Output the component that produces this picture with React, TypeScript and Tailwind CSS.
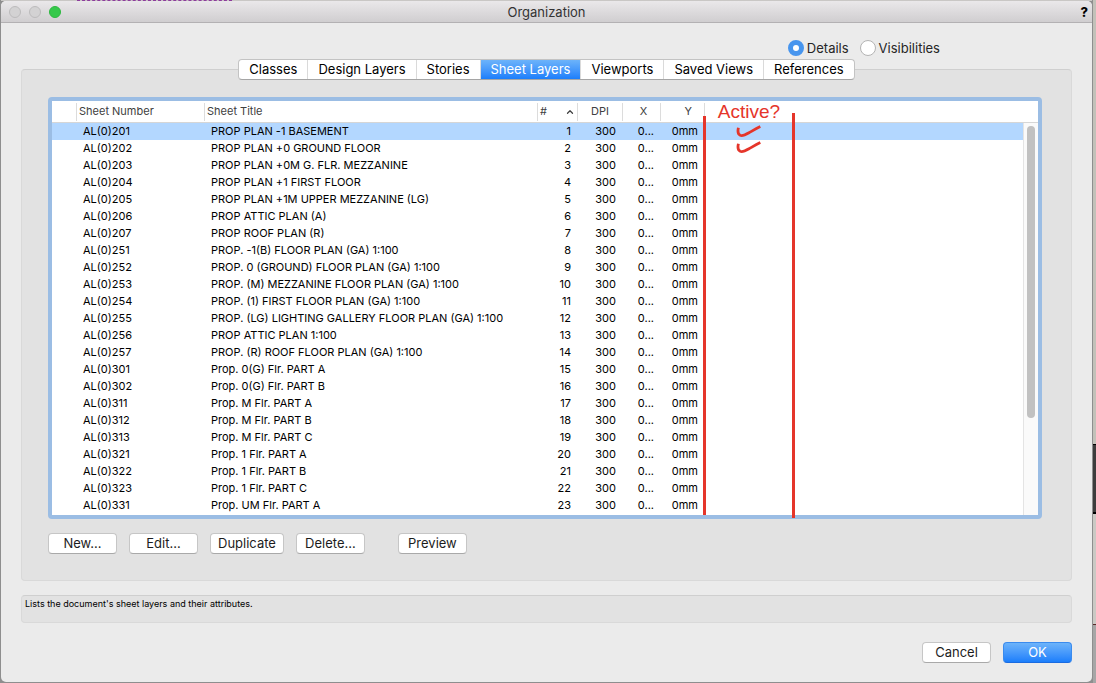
import React, { useState } from 'react';
import { ChevronUp } from 'lucide-react';

interface Sheet {
  number: string;
  title: string;
}

const tabs = [
  'Classes',
  'Design Layers',
  'Stories',
  'Sheet Layers',
  'Viewports',
  'Saved Views',
  'References',
];

const sheets: Sheet[] = [
  { number: 'AL(0)201', title: 'PROP PLAN -1 BASEMENT' },
  { number: 'AL(0)202', title: 'PROP PLAN +0 GROUND FLOOR' },
  { number: 'AL(0)203', title: 'PROP PLAN +0M G. FLR. MEZZANINE' },
  { number: 'AL(0)204', title: 'PROP PLAN +1 FIRST FLOOR' },
  { number: 'AL(0)205', title: 'PROP PLAN +1M UPPER MEZZANINE (LG)' },
  { number: 'AL(0)206', title: 'PROP ATTIC PLAN (A)' },
  { number: 'AL(0)207', title: 'PROP ROOF PLAN (R)' },
  { number: 'AL(0)251', title: 'PROP. -1(B) FLOOR PLAN (GA) 1:100' },
  { number: 'AL(0)252', title: 'PROP. 0 (GROUND) FLOOR PLAN (GA) 1:100' },
  { number: 'AL(0)253', title: 'PROP. (M) MEZZANINE FLOOR PLAN (GA) 1:100' },
  { number: 'AL(0)254', title: 'PROP. (1) FIRST FLOOR PLAN (GA) 1:100' },
  { number: 'AL(0)255', title: 'PROP. (LG) LIGHTING GALLERY FLOOR PLAN (GA) 1:100' },
  { number: 'AL(0)256', title: 'PROP ATTIC PLAN 1:100' },
  { number: 'AL(0)257', title: 'PROP. (R) ROOF FLOOR PLAN (GA) 1:100' },
  { number: 'AL(0)301', title: 'Prop. 0(G) Flr. PART A' },
  { number: 'AL(0)302', title: 'Prop. 0(G) Flr. PART B' },
  { number: 'AL(0)311', title: 'Prop. M Flr. PART A' },
  { number: 'AL(0)312', title: 'Prop. M Flr. PART B' },
  { number: 'AL(0)313', title: 'Prop. M Flr. PART C' },
  { number: 'AL(0)321', title: 'Prop. 1 Flr. PART A' },
  { number: 'AL(0)322', title: 'Prop. 1 Flr. PART B' },
  { number: 'AL(0)323', title: 'Prop. 1 Flr. PART C' },
  { number: 'AL(0)331', title: 'Prop. UM Flr. PART A' },
];

interface PushButtonProps {
  children: React.ReactNode;
  className?: string;
  primary?: boolean;
}

const PushButton: React.FC<PushButtonProps> = ({ children, className = '', primary = false }) => (
  <button
    type="button"
    className={`h-[21px] min-w-[69px] rounded border px-[7px] text-[13px] leading-[19px] ${
      primary
        ? 'border-[#3a8bee] border-b-[#1a6be0] bg-linear-to-b from-[#6cb3fa] to-[#1a7efb] text-white'
        : 'border-[#c6c6c6] border-b-[#a9a9a9] bg-white text-[#1c1c1c]'
    } ${className}`}
  >
    {children}
  </button>
);

interface RadioProps {
  label: string;
  checked: boolean;
  onChange: () => void;
}

const Radio: React.FC<RadioProps> = ({ label, checked, onChange }) => (
  <label className="flex items-center gap-[3px] text-[13px] leading-4 text-[#262626]">
    <input
      type="radio"
      name="view"
      checked={checked}
      onChange={onChange}
      className="size-4 appearance-none rounded-full border border-[#b4b4b4] bg-white checked:border-[5px] checked:border-[#4795ee]"
    />
    {label}
  </label>
);

interface HeadProps {
  children?: React.ReactNode;
  className?: string;
}

const Head: React.FC<HeadProps> = ({ children, className = '' }) => (
  <th scope="col" className="h-[22px] border-b border-[#d6d6d6] p-0 font-normal">
    <div className={`flex h-[18px] items-center border-r border-[#dcdcdc] ${className}`}>{children}</div>
  </th>
);

const CheckMark = () => (
  <svg viewBox="0 0 26 13" className="block h-[13px] w-[26px]" fill="none" stroke="#e5352a" strokeLinecap="butt">
    <path d="M2.400 2.800C1.700 5.800 1.900 9.200 4.200 10.300C6.500 11.200 10 9.500 13 7.800C16.500 5.800 20 3.600 24.300 1.600" strokeWidth="2.800" />
  </svg>
);

const App: React.FC = () => {
  const [tab, setTab] = useState('Sheet Layers');
  const [view, setView] = useState('Details');
  const [selected, setSelected] = useState('AL(0)201');

  return (
    <div className="flex min-h-screen bg-[#8e8e8e] pl-px font-['Inter',sans-serif]">
      <div className="flex min-w-0 flex-1 flex-col pb-px">
        {/* document showing above the window */}
        <div className="h-px bg-[#c9c7c5] pl-[76px]">
          <div className="w-[155px] border-t border-dashed border-[#8d3c9c]" />
        </div>

        <div className="flex flex-1 flex-col rounded-[5px] bg-[#ebebeb]">
          <header className="grid h-[22px] grid-cols-[1fr_auto_1fr] items-center rounded-t-[5px] border-b border-[#b3b1b3] bg-linear-to-b from-[#eae8ea] to-[#d0ced0]">
            <div className="flex gap-2 pl-2">
              <button type="button" aria-label="Close" className="size-3 rounded-full border border-[#bcbbbc] bg-[#d3d2d3]" />
              <button type="button" aria-label="Minimize" className="size-3 rounded-full border border-[#bcbbbc] bg-[#d3d2d3]" />
              <button type="button" aria-label="Zoom" className="size-3 rounded-full border border-[#2db83f] bg-[#35c84a]" />
            </div>
            <h1 className="text-[13px] leading-4 text-[#333]">Organization</h1>
            <button type="button" aria-label="Help" className="justify-self-end pr-1 text-[13px] leading-4 font-extrabold text-black">
              ?
            </button>
          </header>

          <main className="flex flex-1 flex-col px-5">
            <div className="mt-[17px] flex justify-end gap-[11px] pr-[132px]">
              <Radio label="Details" checked={view === 'Details'} onChange={() => setView('Details')} />
              <Radio label="Visibilities" checked={view === 'Visibilities'} onChange={() => setView('Visibilities')} />
            </div>

            <nav className="relative z-10 mt-[3px] -mb-[11px] flex justify-center">
              <div className="flex h-[21px] divide-x divide-[#dadada] overflow-hidden rounded border border-[#c3c3c3] border-b-[#a5a5a5] bg-white">
                {tabs.map((name) => (
                  <button
                    key={name}
                    type="button"
                    onClick={() => setTab(name)}
                    className={`px-[10px] text-[13px] leading-[19px] ${
                      tab === name ? 'bg-linear-to-b from-[#6cb3fa] to-[#1a7efb] text-white' : 'text-black'
                    }`}
                  >
                    {name}
                  </button>
                ))}
              </div>
            </nav>

            <section className="flex-1 rounded border border-[#d9d9d9] border-t-[#cfcfcf] bg-[#e2e2e2] px-[26px] pt-[27px]">
              <div className="relative mr-[3px] flex rounded border-4 border-[#9bbde4] bg-white pb-px">
                <table className="min-w-0 flex-1 table-fixed border-separate border-spacing-0 text-[11px] leading-[17px]">
                  <colgroup>
                    <col className="w-[25px]" />
                    <col className="w-[128px]" />
                    <col className="w-[333px]" />
                    <col className="w-[40px]" />
                    <col className="w-[45px]" />
                    <col className="w-[38px]" />
                    <col className="w-[44px]" />
                    <col />
                  </colgroup>
                  <thead className="text-left text-[#404040]">
                    <tr>
                      <Head />
                      <Head className="pl-[2px]">Sheet Number</Head>
                      <Head className="pl-[2px]">Sheet Title</Head>
                      <Head className="justify-between pr-[2px] pl-[2px]">
                        #
                        <ChevronUp className="size-[10px]" strokeWidth={3} />
                      </Head>
                      <Head className="justify-center">DPI</Head>
                      <Head className="justify-center pl-1">X</Head>
                      <Head className="justify-end pr-3">Y</Head>
                      <th className="border-b border-[#d6d6d6] p-0" />
                    </tr>
                  </thead>
                  <tbody className="text-black">
                    {sheets.map((sheet, index) => (
                      <tr
                        key={sheet.number}
                        onClick={() => setSelected(sheet.number)}
                        className={selected === sheet.number ? 'bg-[#b3d7ff]' : ''}
                      >
                        <td className="p-0" />
                        <td className="p-0 pl-[6px]">{sheet.number}</td>
                        <td className="p-0 pl-[6px] whitespace-nowrap">{sheet.title}</td>
                        <td className="p-0 pr-[7px] text-right">{index + 1}</td>
                        <td className="p-0 pr-[7px] text-right">300</td>
                        <td className="p-0 pr-[7px] text-right">0...</td>
                        <td className="p-0 pr-[7px] text-right">0mm</td>
                        <td className="p-0" />
                      </tr>
                    ))}
                  </tbody>
                </table>

                <div className="flex w-[15px] flex-col">
                  <div className="h-[22px] border-b border-[#d6d6d6]" />
                  <div className="-mb-px flex-1 border-l border-[#e4e4e4] bg-[#fafafa] px-[3px] pt-[3px]">
                    <div className="h-[292px] w-2 rounded-full bg-[#c1c1c1]" />
                  </div>
                </div>

                {/* hand drawn markup over the list */}
                <div className="pointer-events-none absolute top-0 -bottom-[3px] left-[651px] flex w-[92px] justify-between">
                  <div className="mt-[15px] mb-[3px] w-[3px] bg-[#e5352a]" />
                  <div className="flex flex-col items-center gap-[3px]">
                    <span className="font-['Liberation_Sans',sans-serif] text-[19px] leading-[21px] text-[#e5352a]">Active?</span>
                    <CheckMark />
                    <CheckMark />
                  </div>
                  <div className="mt-3 w-[3px] bg-[#e5352a]" />
                </div>
              </div>

              <div className="mt-[14px] flex gap-3">
                <PushButton>New...</PushButton>
                <PushButton>Edit...</PushButton>
                <PushButton>Duplicate</PushButton>
                <PushButton>Delete...</PushButton>
                <PushButton className="ml-[21px]">Preview</PushButton>
              </div>
            </section>

            <p className="mt-[14px] h-7 rounded border border-[#d9d9d9] border-t-[#cfcfcf] bg-[#e2e2e2] px-[3px] text-[9px] leading-4 text-black">
              Lists the document's sheet layers and their attributes.
            </p>

            <footer className="mt-[19px] mb-[19px] flex justify-end gap-3">
              <PushButton>Cancel</PushButton>
              <PushButton primary>OK</PushButton>
            </footer>
          </main>
        </div>
      </div>

      {/* document showing beside the window */}
      <div className="flex w-1 flex-col border-l border-[#8e8e8e]">
        <div className="h-[444px] bg-[#c2c1b9]" />
        <div className="h-[70px] border-t border-b-2 border-black bg-[#3c3c3c]" />
        <div className="h-[110px] bg-[#cac9c4]" />
        <div className="flex-1 border-t border-[#5a2a2a] bg-[#a6a6a6]" />
      </div>
    </div>
  );
};

export default App;
